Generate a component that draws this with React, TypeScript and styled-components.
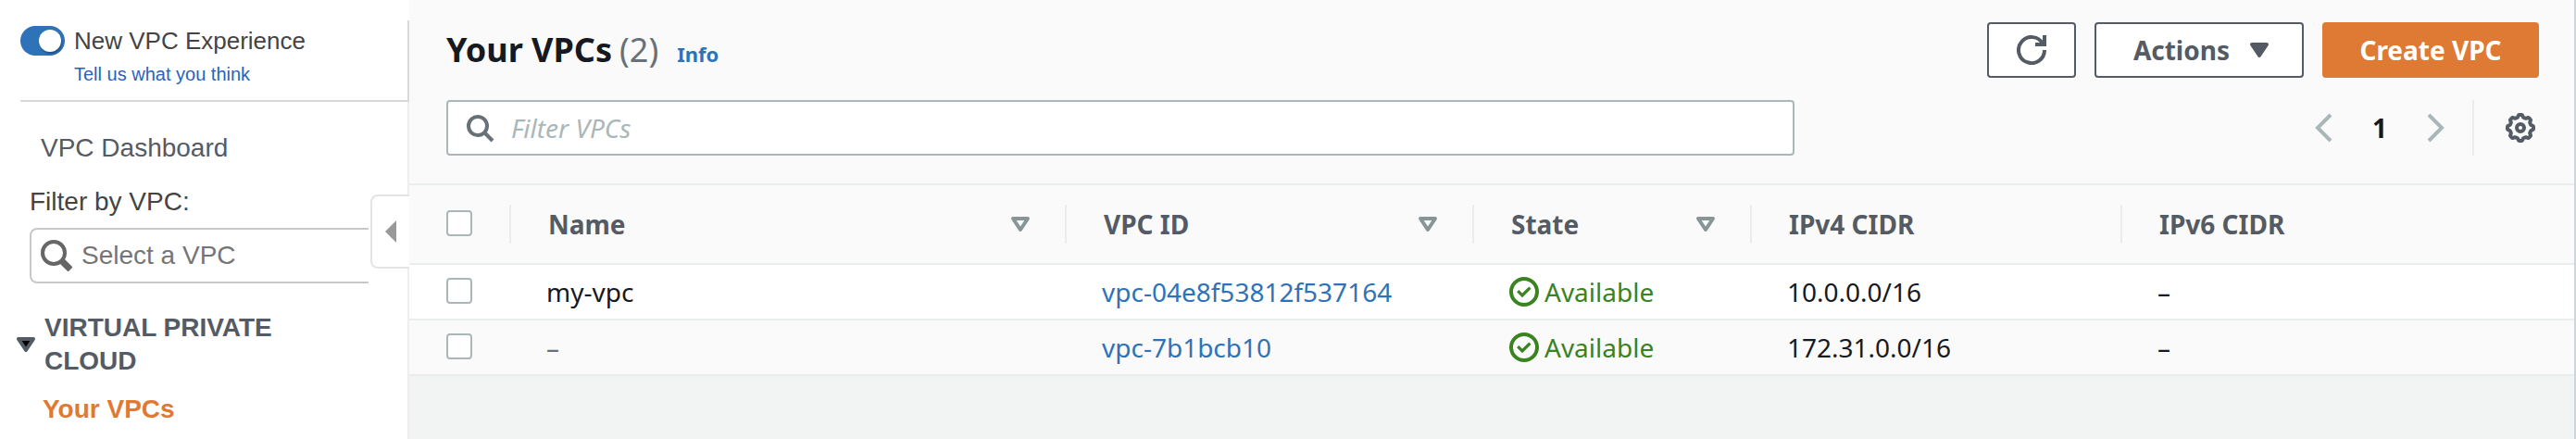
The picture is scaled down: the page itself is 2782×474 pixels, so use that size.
import React from "react";
import styled, { createGlobalStyle, css } from "styled-components";

const ember = `"Noto Sans", "Open Sans", sans-serif`;
const helvetica = `"Liberation Sans", Arial, sans-serif`;

const GlobalStyle = createGlobalStyle`
  *, *::before, *::after { box-sizing: border-box; }
  body { margin: 0; background: #f2f3f3; }
  button, input { font: inherit; }
  a { text-decoration: none; }
`;

const Page = styled.div`
  display: flex;
  min-height: 100vh;
  font-family: ${ember};
  font-size: 28px;
  line-height: 36px;
  color: #16191f;
`;

/* Sidebar */
const Sidebar = styled.aside`
  position: relative;
  flex: 0 0 442px;
  display: flex;
  flex-direction: column;
  padding-top: 22px;
  background: #fff;
  font-family: ${helvetica};
`;

const Experience = styled.div`
  display: grid;
  grid-template-columns: 48px 1fr;
  column-gap: 10px;
  align-content: start;
  margin-left: 22px;
  height: 88px;
  padding-top: 6px;
  border-right: 2px solid #d9d9d9;
  border-bottom: 2px solid #d9d9d9;
  line-height: 32px;
`;

const Toggle = styled.input`
  appearance: none;
  position: relative;
  width: 48px;
  height: 32px;
  margin: 0;
  border-radius: 16px;
  background: #2e73b8;
  &::after {
    content: "";
    position: absolute;
    top: 4px;
    right: 4px;
    width: 24px;
    height: 24px;
    border-radius: 50%;
    background: #fff;
    box-shadow: 1px 2px 2px rgba(0, 0, 0, 0.3);
  }
  &:not(:checked) { background: #879596; }
  &:not(:checked)::after { right: 20px; }
`;

const ToggleLabel = styled.label`
  font-size: 26px;
  color: #444;
`;

const Feedback = styled.a`
  grid-column: 2;
  font-size: 20px;
  line-height: 40px;
  color: #2a62bd;
`;

const Nav = styled.nav`
  flex: 1;
  display: flex;
  flex-direction: column;
  align-items: flex-start;
  padding-top: 32px;
  border-right: 2px solid #eee;
`;

const NavLink = styled.a<{ $current?: boolean }>`
  margin-left: ${(p) => (p.$current ? 46 : 44)}px;
  font-weight: ${(p) => (p.$current ? 700 : 400)};
  color: ${(p) => (p.$current ? "#df7a33" : "#545b64")};
`;

const FilterLabel = styled.label`
  margin: 22px 0 10px 32px;
  color: #444;
`;

const VpcPicker = styled.div`
  display: flex;
  align-items: center;
  gap: 10px;
  width: 366px;
  height: 60px;
  margin-left: 32px;
  padding-left: 10px;
  border: 2px solid #c8c8c8;
  border-right: 0;
  border-radius: 8px 0 0 8px;
`;

const BareInput = styled.input`
  flex: 1;
  min-width: 0;
  padding: 0;
  border: 0;
  outline: 0;
  background: transparent;
  color: inherit;
  &::placeholder { color: #757575; opacity: 1; }
`;

const Section = styled.button`
  display: flex;
  align-items: center;
  gap: 10px;
  width: 340px;
  margin: 30px 0 16px 18px;
  padding: 0;
  border: 0;
  background: none;
  font-weight: 700;
  text-align: left;
  color: #545b64;
`;

const Collapse = styled.button`
  position: absolute;
  top: 210px;
  right: 0;
  display: flex;
  align-items: center;
  width: 42px;
  height: 80px;
  padding: 0 0 0 14px;
  border: 2px solid #e4e4e4;
  border-right: 0;
  border-radius: 8px 0 0 8px;
  background: #fff;
`;

/* Main panel */
const Main = styled.main`
  flex: 1;
  min-width: 0;
  border-right: 2px solid #d0d6d8;
`;

const Header = styled.header`
  display: flex;
  flex-direction: column;
  gap: 24px;
  padding: 24px 38px 30px 40px;
  background: #fafafa;
  border-bottom: 2px solid #eaeded;
`;

const Bar = styled.div`
  display: flex;
  align-items: center;
  justify-content: space-between;
  height: 60px;
`;

const Title = styled.h1`
  display: flex;
  align-items: baseline;
  gap: 8px;
  margin: 0;
  padding-top: 4px;
  font-size: 36px;
  line-height: 44px;
`;

const Count = styled.span`
  font-weight: 400;
  color: #687078;
`;

const Info = styled.a`
  margin-left: 12px;
  font-size: 22px;
  font-weight: 700;
  color: #2e73b8;
`;

const Buttons = styled.div`
  display: flex;
  gap: 20px;
`;

const Button = styled.button<{ $kind?: "menu" | "primary" }>`
  display: flex;
  align-items: center;
  justify-content: center;
  gap: 16px;
  height: 60px;
  min-width: 96px;
  padding: 0 30px;
  border: 2px solid #545b64;
  border-radius: 4px;
  background: #fff;
  color: #545b64;
  font-weight: 700;
  white-space: nowrap;
  ${(p) => p.$kind === "menu" && css`
    padding: 0 30px 0 40px;
  `}
  ${(p) => p.$kind === "primary" && css`
    min-width: 234px;
    border-color: #de7a33;
    background: #de7a33;
    color: #fff;
  `}
`;

const SearchBox = styled.div`
  display: flex;
  align-items: center;
  gap: 18px;
  flex: 0 1 1456px;
  height: 60px;
  padding: 0 18px;
  border: 2px solid #aab7b8;
  border-radius: 4px;
  background: #fff;
  input::placeholder { color: #aab7b8; font-style: italic; }
`;

const Pager = styled.div`
  display: flex;
  align-items: center;
  height: 60px;
`;

const IconButton = styled.button`
  display: flex;
  padding: 0;
  border: 0;
  background: none;
`;

const PageNumber = styled.span`
  width: 88px;
  text-align: center;
  font-weight: 700;
`;

const Preferences = styled.div`
  display: flex;
  align-items: center;
  height: 60px;
  margin-left: 24px;
  padding: 0 4px 0 34px;
  border-left: 2px solid #eaeded;
`;

/* Table */
const Table = styled.table`
  width: 100%;
  table-layout: fixed;
  border-collapse: separate;
  border-spacing: 0;
`;

const Col = styled.col<{ $w?: number }>`
  width: ${(p) => (p.$w ? p.$w + "px" : "auto")};
`;

const HeadCell = styled.th`
  height: 86px;
  padding: 0;
  background: #fafafa;
  border-bottom: 2px solid #eaeded;
  text-align: left;
  color: #545b64;
`;

const HeadContent = styled.div<{ $last?: boolean }>`
  display: flex;
  align-items: center;
  justify-content: space-between;
  height: 42px;
  padding: 0 32px 0 40px;
  border-right: ${(p) => (p.$last ? 0 : 2)}px solid #eaeded;
`;

const Row = styled.tr`
  background: #fff;
  &:nth-child(even) { background: #fafafa; }
`;

const Cell = styled.td<{ $check?: boolean; $muted?: boolean }>`
  height: 60px;
  padding: 0 0 0 ${(p) => (p.$check ? 40 : 38)}px;
  border-bottom: 2px solid #eaeded;
  color: ${(p) => (p.$muted ? "#687078" : "inherit")};
`;

const Check = styled.input`
  appearance: none;
  display: block;
  width: 28px;
  height: 28px;
  margin: 0 0 2px;
  border: 2px solid #aab7b8;
  border-radius: 4px;
  background: #fff;
  &:checked { background: #2e73b8; }
`;

const VpcLink = styled.a`
  color: #2e73b8;
`;

const Status = styled.span`
  display: flex;
  align-items: center;
  gap: 6px;
  color: #3b8221;
`;

/* Icons on a 16-unit grid */
const Icon = styled.svg.attrs({ viewBox: "0 0 16 16", "aria-hidden": true })<{ $color: string }>`
  flex: none;
  width: 32px;
  height: 32px;
  fill: none;
  stroke: ${(p) => p.$color};
  stroke-width: 2;
`;

const RefreshIcon = () => (
  <Icon $color="#545b64">
    <path d="M10 5h5V0" />
    <path d="M15 8a7 7 0 1 1-.9-3.4" />
  </Icon>
);

const Caret = ({ filled, color }: { filled?: boolean; color: string }) => (
  <Icon $color={color}>
    <path d="M4 5h8l-4 6z" strokeLinejoin="round" fill={filled ? color : "none"} />
  </Icon>
);

const SearchIcon = () => (
  <Icon $color="#687078">
    <circle cx="7" cy="7" r="5" />
    <path d="m10.5 10.5 4.5 4.5" />
  </Icon>
);

const Chevron = ({ next }: { next?: boolean }) => (
  <Icon $color="#aab7b8">
    <path d={next ? "m4.5 1 7 7-7 7" : "m11.5 1-7 7 7 7"} />
  </Icon>
);

const gearPath = (() => {
  const points: string[] = [];
  for (let i = 0; i < 96; i++) {
    const a = (i / 96) * Math.PI * 2;
    const wave = Math.max(-1, Math.min(1, 1.8 * Math.cos(8 * a)));
    const r = 6.4 + 0.6 * wave;
    points.push(`${(8 + r * Math.sin(a)).toFixed(2)} ${(8 - r * Math.cos(a)).toFixed(2)}`);
  }
  return `M${points.join("L")}Z`;
})();

const GearIcon = () => (
  <Icon $color="#545b64">
    <path d={gearPath} strokeLinejoin="round" />
    <circle cx="8" cy="8" r="2" />
  </Icon>
);

const CheckCircle = () => (
  <Icon $color="#3b8221">
    <circle cx="8" cy="8" r="7" />
    <path d="M4.6 7.6 7 10l4.2-4.2" strokeWidth="1.6" />
  </Icon>
);

const GlassArt = styled.svg`
  flex: none;
  width: 34px;
  height: 34px;
`;

const SmallArt = styled.svg<{ $w: number; $h: number }>`
  flex: none;
  width: ${(p) => p.$w}px;
  height: ${(p) => p.$h}px;
`;

const columns = [
  { title: "Name", sortable: true },
  { title: "VPC ID", sortable: true },
  { title: "State", sortable: true },
  { title: "IPv4 CIDR", sortable: false },
  { title: "IPv6 CIDR", sortable: false },
];

const vpcs = [
  { name: "my-vpc", id: "vpc-04e8f53812f537164", ipv4: "10.0.0.0/16" },
  { name: "–", id: "vpc-7b1bcb10", ipv4: "172.31.0.0/16" },
];

export default function App() {
  return (
    <>
      <GlobalStyle />
      <Page>
        <Sidebar>
          <Experience>
            <Toggle type="checkbox" role="switch" id="experience" defaultChecked />
            <ToggleLabel htmlFor="experience">New VPC Experience</ToggleLabel>
            <Feedback href="#feedback">Tell us what you think</Feedback>
          </Experience>
          <Nav>
            <NavLink href="#dashboard">VPC Dashboard</NavLink>
            <FilterLabel htmlFor="vpc-filter">Filter by VPC:</FilterLabel>
            <VpcPicker>
              <GlassArt viewBox="0 0 34 34" aria-hidden="true">
                <circle cx="14" cy="14" r="12" fill="none" stroke="#666" strokeWidth="4" />
                <path d="m23 23 9 9" stroke="#666" strokeWidth="7" />
              </GlassArt>
              <BareInput id="vpc-filter" placeholder="Select a VPC" />
            </VpcPicker>
            <Section type="button">
              <SmallArt $w={20} $h={16} viewBox="0 0 20 16" aria-hidden="true">
                <path d="M2 2h16l-8 12z" fill="#000" stroke="#545b64" strokeWidth="4" strokeLinejoin="round" />
              </SmallArt>
              <span>VIRTUAL PRIVATE CLOUD</span>
            </Section>
            <NavLink href="#vpcs" $current>Your VPCs</NavLink>
          </Nav>
          <Collapse type="button" aria-label="Collapse navigation">
            <SmallArt $w={12} $h={24} viewBox="0 0 12 24" aria-hidden="true">
              <path d="M12 0v24L0 12z" fill="#999" />
            </SmallArt>
          </Collapse>
        </Sidebar>

        <Main>
          <Header>
            <Bar>
              <Title>
                Your VPCs <Count>(2)</Count>
                <Info href="#info">Info</Info>
              </Title>
              <Buttons>
                <Button type="button" aria-label="Refresh"><RefreshIcon /></Button>
                <Button type="button" $kind="menu">Actions <Caret filled color="#545b64" /></Button>
                <Button type="button" $kind="primary">Create VPC</Button>
              </Buttons>
            </Bar>
            <Bar>
              <SearchBox>
                <SearchIcon />
                <BareInput type="text" aria-label="Filter VPCs" placeholder="Filter VPCs" />
              </SearchBox>
              <Pager>
                <IconButton type="button" aria-label="Previous page"><Chevron /></IconButton>
                <PageNumber>1</PageNumber>
                <IconButton type="button" aria-label="Next page"><Chevron next /></IconButton>
                <Preferences>
                  <IconButton type="button" aria-label="Preferences"><GearIcon /></IconButton>
                </Preferences>
              </Pager>
            </Bar>
          </Header>
          <Table>
            <colgroup>
              <Col $w={110} />
              <Col $w={600} />
              <Col $w={440} />
              <Col $w={300} />
              <Col $w={400} />
              <Col />
            </colgroup>
            <thead>
              <tr>
                <HeadCell scope="col">
                  <HeadContent>
                    <Check type="checkbox" aria-label="Select all VPCs" />
                  </HeadContent>
                </HeadCell>
                {columns.map((c, i) => (
                  <HeadCell scope="col" key={c.title}>
                    <HeadContent $last={i === columns.length - 1}>
                      {c.title}
                      {c.sortable && (
                        <IconButton type="button" aria-label={`Sort by ${c.title}`}>
                          <Caret color="#879596" />
                        </IconButton>
                      )}
                    </HeadContent>
                  </HeadCell>
                ))}
              </tr>
            </thead>
            <tbody>
              {vpcs.map((v) => (
                <Row key={v.id}>
                  <Cell $check><Check type="checkbox" aria-label={`Select ${v.id}`} /></Cell>
                  <Cell $muted={v.name === "–"}>{v.name}</Cell>
                  <Cell><VpcLink href={`#${v.id}`}>{v.id}</VpcLink></Cell>
                  <Cell><Status><CheckCircle />Available</Status></Cell>
                  <Cell>{v.ipv4}</Cell>
                  <Cell>–</Cell>
                </Row>
              ))}
            </tbody>
          </Table>
        </Main>
      </Page>
    </>
  );
}
